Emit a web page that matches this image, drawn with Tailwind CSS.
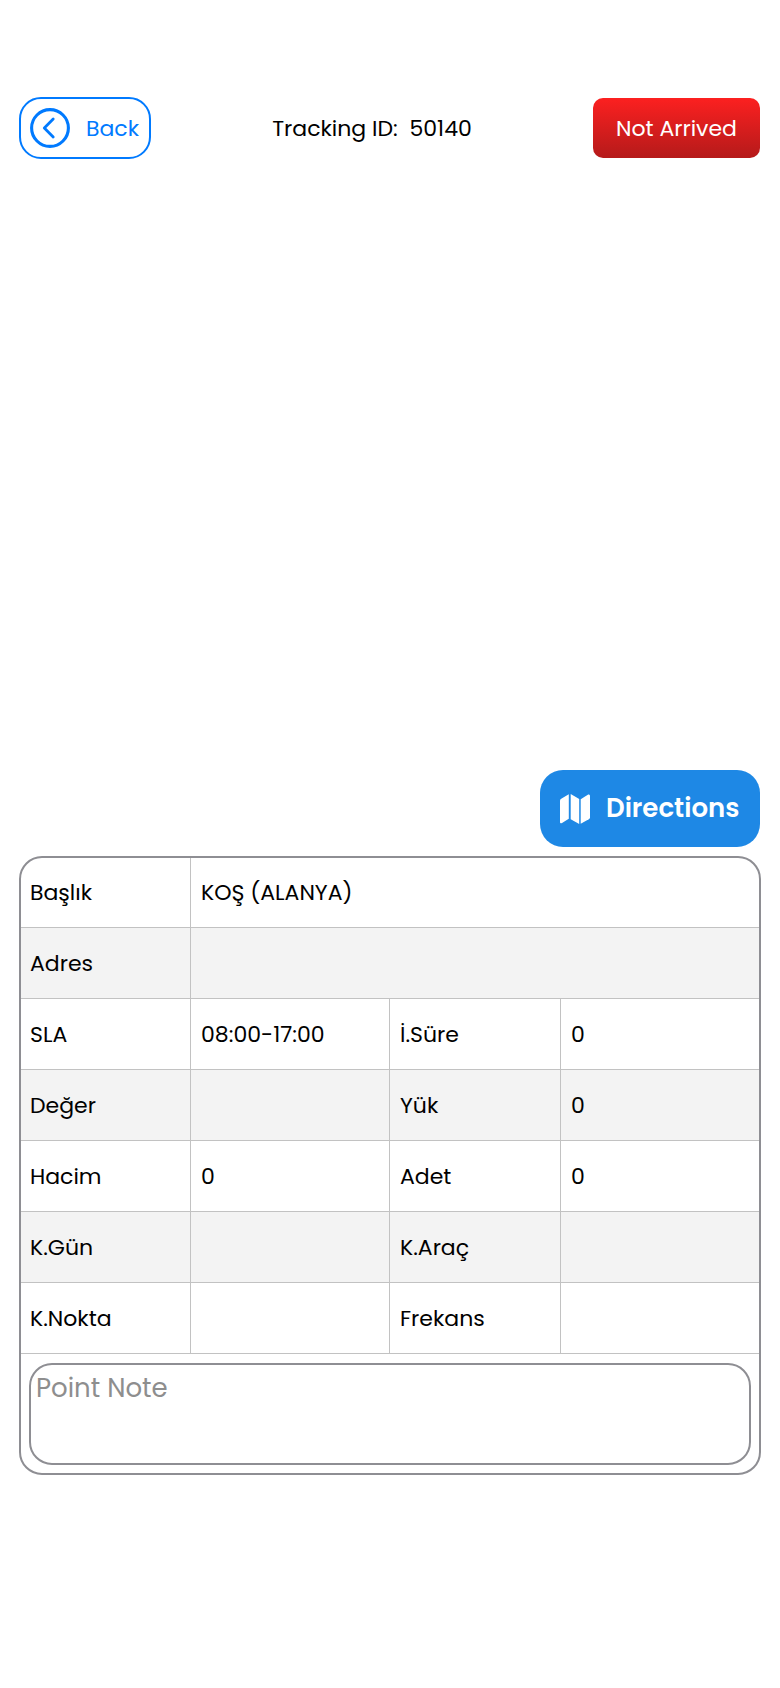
<!DOCTYPE html>
<html lang="tr"><head><meta charset="utf-8"><title>Tracking</title>
<script src="https://cdn.jsdelivr.net/npm/@tailwindcss/browser@4"></script></head>
<body class="bg-white text-black font-['Poppins','Inter',sans-serif] text-[22px] leading-8">
<main class="flex h-[1688px] w-[780px] flex-col px-[19px] pt-[97px]">
<header class="flex h-[62px] items-center justify-between">
<button class="flex h-[62px] w-[132px] items-center rounded-[22px] border-2 border-[#007aff] pl-[9px] text-[#007aff]">
<svg class="size-10 shrink-0" viewBox="0 0 40 40" fill="none" stroke="currentColor" stroke-linecap="round" stroke-linejoin="round"><circle cx="20" cy="20" r="18.4" stroke-width="3.1"/><path d="M23.2 11 14.3 20 23.2 29" stroke-width="2.8"/></svg>
<span class="ml-[16px] pt-[2px]">Back</span></button>
<h1 class="whitespace-pre pt-[2px]">Tracking ID:  50140</h1>
<button class="mr-px flex h-[60px] w-[167px] items-center justify-center rounded-[10px] bg-linear-to-b from-[#fc2020] to-[#b51a1a] pt-[2px] text-white">Not Arrived</button>
</header>
<div class="mt-[611px] flex justify-end pr-px">
<button class="flex h-[77px] w-[220px] items-center rounded-[23px] bg-[#1e88e5] pl-5 text-[26px] leading-[37px] font-semibold text-white">
<svg class="size-[30px] shrink-0" viewBox="0 0 30 30" fill="currentColor"><path d="M0 6.7Q0 5.4 1.2 4.7L8.8.2V24.8L2 28.9Q0 30 0 28Z"/><path d="M10.7 0 19.2 5V30L10.7 25.2Z"/><path d="M20.7 5.2 28.2.6Q30 0 30 2V23.3Q30 24.6 28.8 25.3L20.7 29.8Z"/></svg>
<span class="ml-4">Directions</span></button></div>
<section class="mt-[9px] h-[619px] overflow-hidden rounded-[23px] border-2 border-[#8e8e93]">
<div class="grid grid-cols-[170px_199px_171px_198px] grid-rows-[70px_repeat(6,71px)] *:flex *:items-center *:border-b *:border-[#c2c2c2]">
<div class="border-r pt-px pl-[9px]">Başlık</div><div class="col-span-3 pt-px pl-2.5">KOŞ (ALANYA)</div>
<div class="border-r bg-[#f3f3f3] pt-[2px] pl-[9px]">Adres</div><div class="col-span-3 bg-[#f3f3f3]"></div>
<div class="border-r pt-[2px] pl-[9px]">SLA</div><div class="border-r pt-[2px] pl-2.5">08:00-17:00</div><div class="border-r pt-[2px] pl-2.5">İ.Süre</div><div class="pt-[2px] pl-2.5">0</div>
<div class="border-r bg-[#f3f3f3] pt-[2px] pl-[9px]">Değer</div><div class="border-r bg-[#f3f3f3]"></div><div class="border-r bg-[#f3f3f3] pt-[2px] pl-2.5">Yük</div><div class="bg-[#f3f3f3] pt-[2px] pl-2.5">0</div>
<div class="border-r pt-[2px] pl-[9px]">Hacim</div><div class="border-r pt-[2px] pl-2.5">0</div><div class="border-r pt-[2px] pl-2.5">Adet</div><div class="pt-[2px] pl-2.5">0</div>
<div class="border-r bg-[#f3f3f3] pt-[2px] pl-[9px]">K.Gün</div><div class="border-r bg-[#f3f3f3]"></div><div class="border-r bg-[#f3f3f3] pt-[2px] pl-2.5">K.Araç</div><div class="bg-[#f3f3f3]"></div>
<div class="border-r pt-[2px] pl-[9px]">K.Nokta</div><div class="border-r"></div><div class="border-r pt-[2px] pl-2.5">Frekans</div><div></div>
</div>
<div class="mx-2 mt-[9px] h-[102px] rounded-[23px] border-2 border-[#8e8e93] pt-[5px] pl-[5px] text-[26px] leading-9 text-[#8e8e8e]">Point Note</div>
</section></main>
</body></html>
